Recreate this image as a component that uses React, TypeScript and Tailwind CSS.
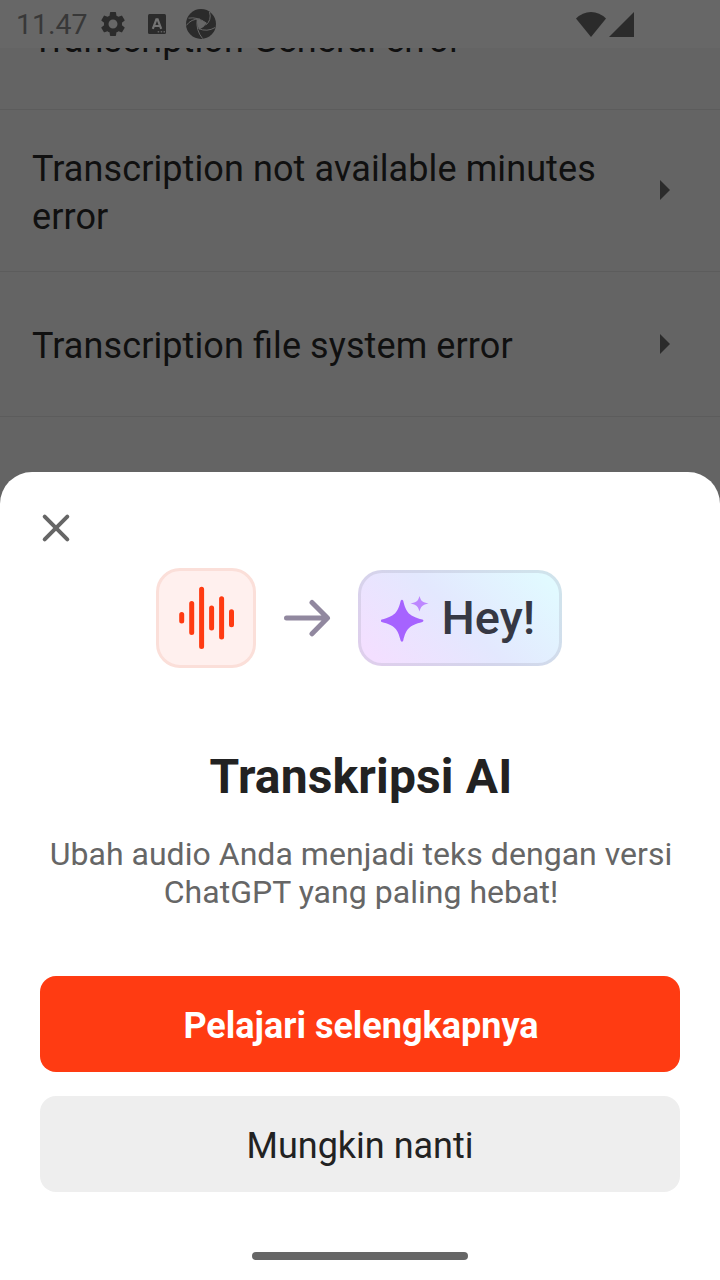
import React from "react";

function StatusBar() {
  return (
    <header className="relative z-10 flex h-12 shrink-0 items-center bg-[#676767] text-[#2b2b2b]">
      <span className="ml-4 w-[71px] whitespace-nowrap pt-[3px] text-[28.5px] leading-none text-[#383838]">11.47</span>
      <svg className="ml-[11px] h-[30px] w-[30px]" viewBox="0 0 24 24" fill="currentColor">
        <path d="M19.14 12.94c.04-.3.06-.61.06-.94 0-.32-.02-.64-.07-.94l2.03-1.58a.49.49 0 0 0 .12-.61l-1.92-3.32a.488.488 0 0 0-.59-.22l-2.39.96c-.5-.38-1.03-.7-1.62-.94l-.36-2.54a.484.484 0 0 0-.48-.41h-3.84c-.24 0-.43.17-.47.41l-.36 2.54c-.59.24-1.13.57-1.62.94l-2.39-.96c-.22-.08-.47 0-.59.22L2.74 8.87c-.12.21-.08.47.12.61l2.03 1.58c-.05.3-.09.63-.09.94s.02.64.07.94l-2.03 1.58a.49.49 0 0 0-.12.61l1.92 3.32c.12.22.37.29.59.22l2.39-.96c.5.38 1.03.7 1.62.94l.36 2.54c.05.24.24.41.48.41h3.84c.24 0 .44-.17.47-.41l.36-2.54c.59-.24 1.13-.56 1.62-.94l2.39.96c.22.08.47 0 .59-.22l1.92-3.32c.12-.22.07-.47-.12-.61l-2.01-1.58zM12 15.6A3.61 3.61 0 0 1 8.4 12c0-1.98 1.62-3.6 3.6-3.6s3.6 1.62 3.6 3.6-1.62 3.6-3.6 3.6z" />
      </svg>
      <svg className="ml-5 h-5 w-[18px]" viewBox="0 0 18 20">
        <rect width="18" height="20" rx="1.5" fill="currentColor" />
        <path d="M4.8 14.8 8.4 5.4h1.2l3.6 9.4M6.2 12h5.6" fill="none" stroke="#737373" strokeWidth="2.2" />
        <path d="M9.7 17.8h1.5M12.7 17.8h1.5M15.5 17.8h1.5" stroke="#606060" strokeWidth="1.5" />
      </svg>
      <svg className="ml-5 h-[30px] w-[30px]" viewBox="0 0 30 30">
        <circle cx="15" cy="15" r="15" fill="currentColor" />
        <path d="M11.2 10.2 Q16.8 10.8 20.6 14.2 Q18.5 18 13.3 20.6 Q10.2 15.5 11.2 10.2Z" fill="#676767" />
        <g fill="none" stroke="#676767" strokeWidth="1">
          <path d="M2.5 9.2Q11 7.4 20.6 14.2" />
          <path d="M23.5 3Q26 11.3 19.5 16.3" />
          <path d="M29.2 18.5Q21 23.3 12.5 19.6" />
          <path d="M16.5 29.5Q9.6 21 11.2 10.2" />
          <path d="M.4 16.4Q5 9.7 14 10" />
        </g>
      </svg>
      <svg className="ml-auto h-[25px] w-[30px]" viewBox="0 0 30 25" fill="currentColor">
        <path d="M0 6.6Q6.5 0 15 0t15 6.6L15 25Z" />
      </svg>
      <svg className="mr-[86px] ml-[3px] h-[25px] w-[25px]" viewBox="0 0 25 25" fill="currentColor">
        <path d="M25 0V25H0Z" />
      </svg>
    </header>
  );
}

function Caret() {
  return (
    <svg className="mr-[50px] h-5 w-2.5 shrink-0" viewBox="0 0 10 20" fill="#2b2b2b">
      <path d="M0 0 10 10 0 20Z" />
    </svg>
  );
}

function ErrorList() {
  return (
    <ul className="h-[424px] shrink-0 text-[36px] leading-[48px] tracking-[0.1px] text-[#101010] [font-feature-settings:'liga'_1]">
      <li className="flex h-[62px] items-end overflow-hidden border-b border-[#5c5c5c] pb-[45px] pl-8">
        <span className="whitespace-nowrap">Transcription General error</span>
      </li>
      <li className="flex h-[162px] items-center justify-between border-b border-[#5c5c5c] pb-[2px] pl-8">
        <span className="w-[600px] pt-[7px]">Transcription not available minutes error</span>
        <Caret />
      </li>
      <li className="flex h-[145px] items-center justify-between border-b border-[#5c5c5c] pl-8">
        <span className="pt-[3px]">Transcription file system error</span>
        <Caret />
      </li>
    </ul>
  );
}

function Illustration() {
  return (
    <div className="mt-5 flex h-[100px] items-center justify-center pr-[3px]">
      <div className="flex h-[100px] w-[100px] items-center justify-center rounded-[24px] border-3 border-[#fbdfd9] bg-[#fff0ee]">
        <svg className="h-16 w-14" viewBox="0 0 56 64" fill="none" stroke="#ff3b12" strokeWidth="5" strokeLinecap="round">
          <path d="M3.7 28.5v6.6M13.7 17.6v28.9M23.6 3.3v57.3M33.6 22.1v20M43.6 12.8v38.3M53.5 25.7v13" />
        </svg>
      </div>
      <svg className="mr-[27px] ml-[27px] h-10 w-12" viewBox="0 0 48 40" fill="none" stroke="#91889f" strokeWidth="5" strokeLinecap="round" strokeLinejoin="round">
        <path d="M3.5 20H44M29 4.5 44.5 20 29 35.8" />
      </svg>
      <div className="flex h-24 w-[204px] items-center rounded-[24px] border-3 border-[#a0a0b440] bg-[linear-gradient(45deg,#f3dfff_8%,#e3e8fe_50%,#e1faff_92%)] bg-origin-border pl-5">
        <svg className="mt-[2px] h-[46px] w-12 shrink-0" viewBox="0 0 48 46">
          <path d="M19.7 4.8Q21 2.8 22.2 4.8C25.2 17 28 20 41.4 23.6Q43.5 24.8 41.4 26C28 29.6 25.2 32.6 22.2 44.8Q21 46.8 19.7 44.8C16.7 32.6 13.9 29.6.7 26Q-1.4 24.8.7 23.6C13.9 20 16.7 17 19.7 4.8Z" fill="#a663ff" />
          <path d="M38.5 0C40 5.5 41.5 6.3 47.5 7.5 41.5 9 40 10 38.5 15.5 37 10 35.5 9 29.5 7.5 35.5 6.3 37 5.5 38.5 0Z" fill="#bd87ff" />
        </svg>
        <span className="ml-[13px] pb-[2px] text-[47px] leading-none font-medium text-[#363844]">Hey!</span>
      </div>
    </div>
  );
}

function PromoSheet() {
  return (
    <section className="flex h-[808px] shrink-0 flex-col rounded-t-[32px] bg-white px-10 pt-10 text-center">
      <button className="flex h-8 w-8 items-center justify-center self-start" aria-label="Tutup">
        <svg className="h-8 w-8" viewBox="0 0 32 32" fill="none" stroke="#666" strokeWidth="4" strokeLinecap="round">
          <path d="m4.7 4.7 22.6 22.6M27.3 4.7 4.7 27.3" />
        </svg>
      </button>
      <div className="mt-1"><Illustration /></div>
      <h1 className="mt-[81px] h-14 pl-[2px] text-[48px] leading-[56px] font-bold tracking-[0.15px] text-[#222]">Transkripsi AI</h1>
      <p className="-mx-4 mt-[30px] pl-[2px] text-[32px] leading-[38px] tracking-[0.03px] text-[#666]">
        Ubah audio Anda menjadi teks dengan versi<br />ChatGPT yang paling hebat!
      </p>
      <button className="mt-[65px] h-24 shrink-0 rounded-2xl bg-[#ff3b12] pt-[3px] pl-[2px] text-[36px] font-bold text-white">Pelajari selengkapnya</button>
      <button className="mt-6 h-24 shrink-0 rounded-2xl bg-[#eee] pt-[3px] text-[36px] text-[#222]">Mungkin nanti</button>
      <div className="mx-auto mt-[60px] h-2 w-[216px] shrink-0 rounded-full bg-[#666]" />
    </section>
  );
}

export default function App() {
  return (
    <main className="flex h-[1280px] w-[720px] flex-col overflow-hidden bg-[#646464] font-[Roboto,sans-serif]">
      <StatusBar />
      <ErrorList />
      <PromoSheet />
    </main>
  );
}
